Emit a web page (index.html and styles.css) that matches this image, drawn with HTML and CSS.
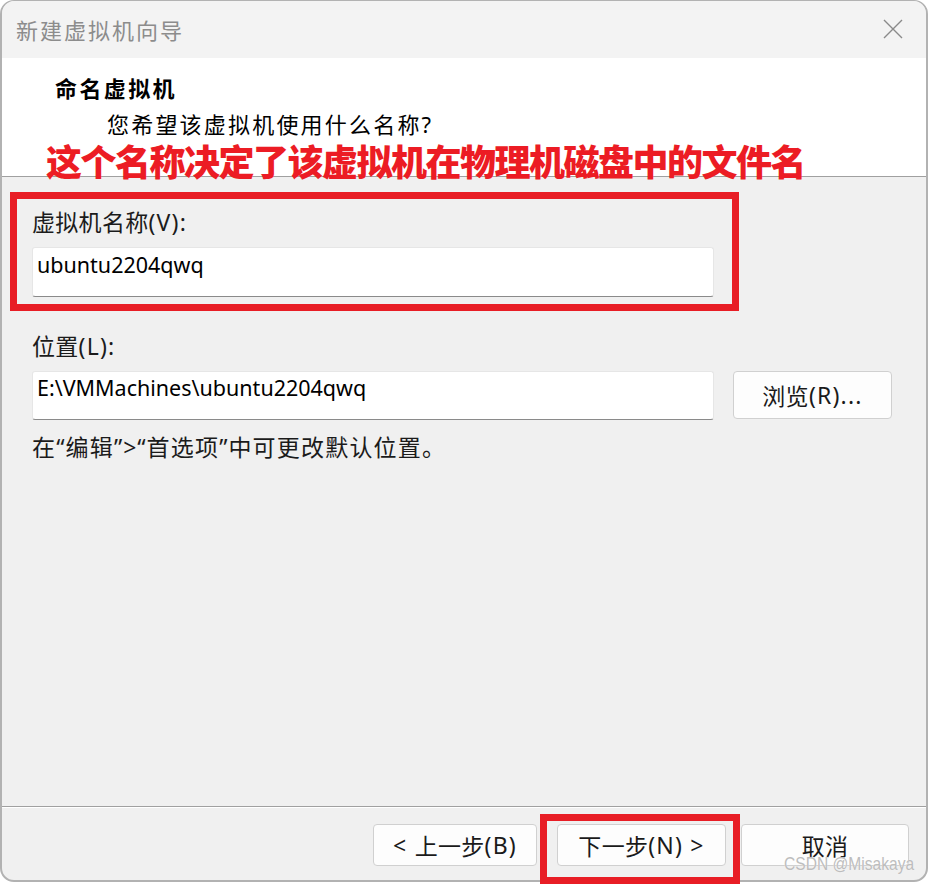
FILE: index.html
```html
<!DOCTYPE html>
<html lang="zh-CN">
<head>
<meta charset="utf-8">
<title>新建虚拟机向导</title>
<link rel="stylesheet" href="styles.css">
</head>
<body>
<div class="dialog">
  <div class="titlebar">
    <span class="title">新建虚拟机向导</span>
    <svg class="close" width="20" height="20" viewBox="0 0 20 20"><path d="M1 1 L19 19 M19 1 L1 19" stroke="#8a8a8a" stroke-width="1.4" fill="none"/></svg>
  </div>
  <div class="header">
    <div class="h-title">命名虚拟机</div>
    <div class="h-sub">您希望该虚拟机使用什么名称?</div>
  </div>
  <div class="content">
    <div class="mark-box">
      <div class="label"><span class="cj">虚拟机名称</span>(V):</div>
      <div class="field">ubuntu2204qwq</div>
    </div>
    <div class="label label2"><span class="cj">位置</span>(L):</div>
    <div class="row">
      <div class="field field2">E:\VMMachines\ubuntu2204qwq</div>
      <div class="btn browse"><span class="cj">浏览</span>(R)...</div>
    </div>
    <div class="hint"><span class="cj">在</span>“<span class="cj">编辑</span>”&gt;“<span class="cj">首选项</span>”<span class="cj">中可更改默认位置。</span></div>
  </div>
  <div class="footer">
    <div class="btn prev">&lt;&nbsp;<span class="cj">上一步</span>(B)</div>
    <div class="mark-btn"><div class="btn next"><span class="cj">下一步</span>(N)&nbsp;&gt;</div></div>
    <div class="btn cancel"><span class="cj">取消</span></div>
  </div>
  <div class="note">这个名称决定了该虚拟机在物理机磁盘中的文件名</div>
  <div class="watermark">CSDN @Misakaya</div>
</div>
</body>
</html>
```

FILE: styles.css
```css
html, body {
  margin: 0;
  padding: 0;
}
body {
  width: 928px;
  height: 884px;
  background: #ffffff;
  overflow: hidden;
  font-family: "Noto Sans", "Noto Sans CJK SC", sans-serif;
  color: #1b1b1b;
}
.dialog {
  position: relative;
  width: 928px;
  height: 882px;
  box-sizing: border-box;
  border: 2px solid #b2b2b2;
  border-top-width: 1px;
  border-radius: 14px;
  background: #f0f0f0;
  display: flex;
  flex-direction: column;
}
.titlebar {
  height: 57px;
  flex: none;
  background: #f3f3f3;
  border-radius: 13px 13px 0 0;
  display: flex;
  align-items: center;
  justify-content: space-between;
  padding: 0 23px 0 14px;
}
.title {
  font-size: 22px;
  line-height: 30px;
  letter-spacing: 2px;
  color: #8c8c8c;
}
.close {
  display: block;
  margin-bottom: 2px;
}
.header {
  height: 118px;
  flex: none;
  box-sizing: border-box;
  background: #ffffff;
  padding: 15px 0 0 53px;
}
.h-title {
  font-size: 22px;
  line-height: 30px;
  font-weight: 700;
  letter-spacing: 2.4px;
  color: #000;
}
.h-sub {
  margin-top: 6px;
  padding-left: 52px;
  font-size: 22px;
  line-height: 30px;
  letter-spacing: 2.2px;
  color: #000;
}
.content {
  flex: 1;
  border-top: 1px solid #a0a0a0;
  padding-left: 30px;
}
.cj {
  letter-spacing: 0.3px;
}
.mark-box {
  margin: 15px 0 0 -22px;
  width: 729px;
  box-sizing: border-box;
  border: 7px solid #e81d25;
  padding: 9px 18px 7px 15px;
}
.label {
  font-size: 23px;
  line-height: 28px;
  letter-spacing: 1.2px;
}
.field {
  width: 682px;
  height: 50px;
  box-sizing: border-box;
  margin-top: 11px;
  background: #ffffff;
  border: 1px solid #e6e6e6;
  border-bottom-color: #8a8a8a;
  border-radius: 3px;
  padding: 2px 0 0 4px;
  font-size: 21.5px;
  line-height: 30px;
  letter-spacing: 0;
  color: #000;
}
.label2 {
  margin-top: 21px;
}
.row {
  display: flex;
  gap: 19px;
  margin-top: 11px;
  align-items: flex-start;
}
.field2 {
  margin-top: 0;
  height: 49px;
  padding-top: 1px;
}
.btn {
  box-sizing: border-box;
  height: 42px;
  background: #fdfdfd;
  border: 1px solid #d0d0d0;
  border-radius: 4px;
  display: flex;
  align-items: center;
  justify-content: center;
  font-size: 23px;
  letter-spacing: 1.2px;
  color: #1a1a1a;
  white-space: nowrap;
}
.browse {
  width: 159px;
  height: 48px;
}
.hint {
  margin-top: 13px;
  font-size: 23px;
  line-height: 28px;
  letter-spacing: 1px;
}
.hint .cj {
  letter-spacing: 1.2px;
}
.footer {
  height: 74px;
  flex: none;
  box-sizing: border-box;
  border-top: 1px solid #a0a0a0;
  box-shadow: inset 0 1px 0 #ffffff;
  display: flex;
  justify-content: flex-end;
  align-items: flex-start;
  padding: 17px 17px 0 0;
}
.prev {
  width: 164px;
}
.mark-btn {
  margin: -10px 0 0 3px;
  border: 7px solid #e81d25;
  padding: 3px 7px 11px 10px;
}
.next {
  width: 169px;
}
.cancel {
  width: 168px;
  margin-left: 1px;
}
.note {
  position: absolute;
  left: 44px;
  top: 142px;
  font-size: 36px;
  line-height: 40px;
  font-weight: 900;
  letter-spacing: -1.5px;
  color: #ec1c24;
  white-space: nowrap;
}
.watermark {
  position: absolute;
  left: 782px;
  top: 852px;
  font-family: "Liberation Sans", sans-serif;
  font-size: 19px;
  line-height: 22px;
  color: #bdbdbd;
  text-shadow: 0 0 1px #ffffff;
  white-space: nowrap;
  transform: scaleX(0.82);
  transform-origin: left center;
}
```
